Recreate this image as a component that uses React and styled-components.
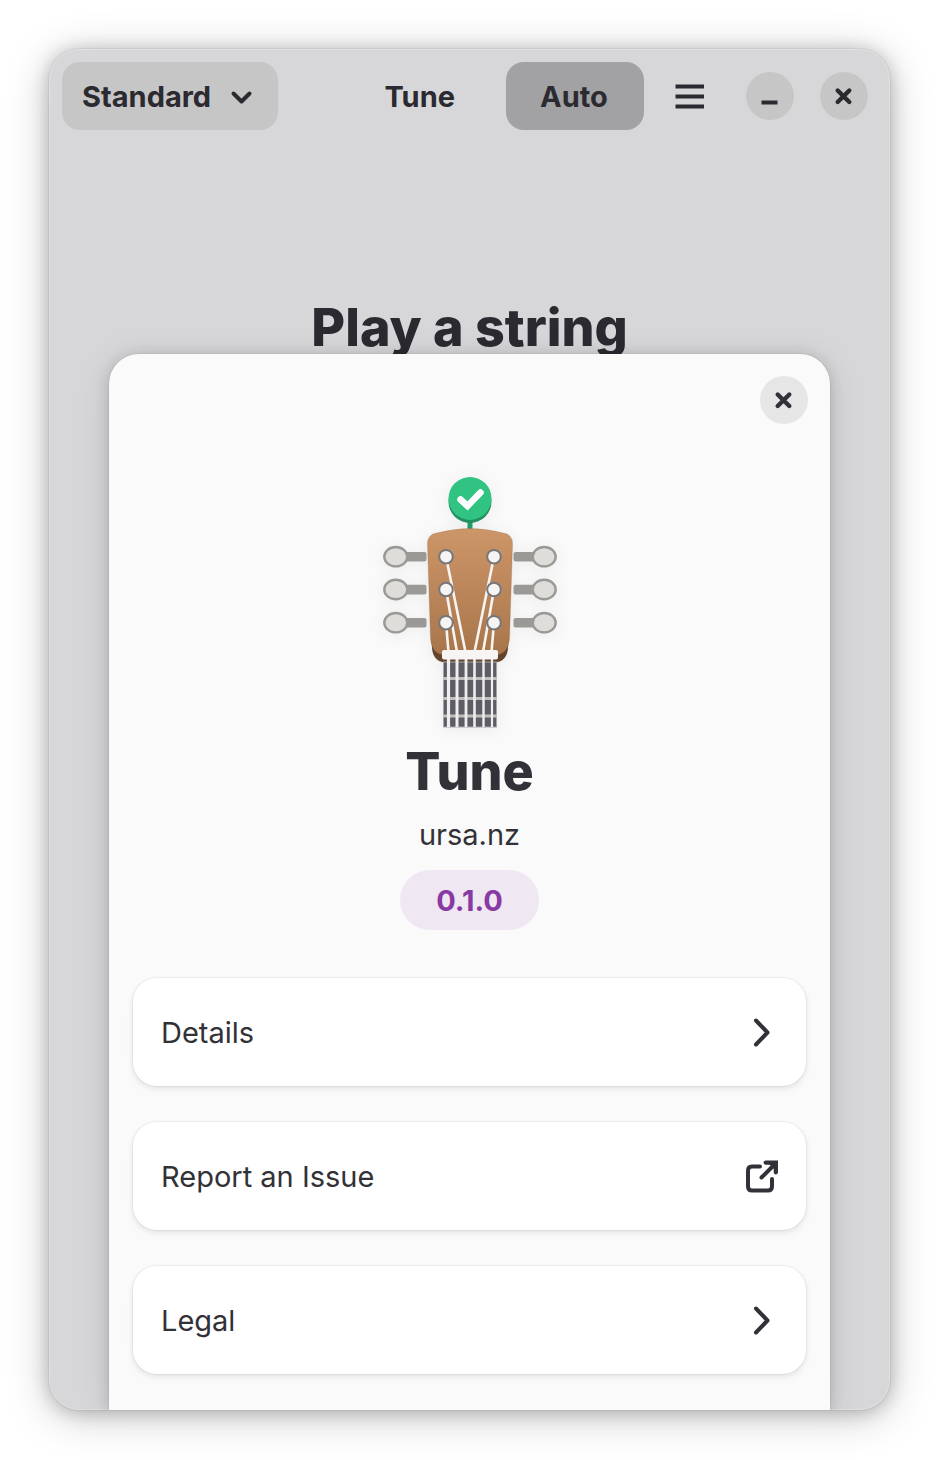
import { useState } from "react"
import styled, { createGlobalStyle } from "styled-components"

const GlobalStyle = createGlobalStyle`
  *, *::before, *::after {
    box-sizing: border-box;
  }

  body {
    margin: 0;
    background: #fff;
    color: #323137;
    font-family: Inter, "Liberation Sans", sans-serif;
    font-size: 29px;
    line-height: 36px;
  }

  button, select {
    font: inherit;
    color: inherit;
    border: 0;
    cursor: pointer;
  }
`

const Page = styled.div`
  padding: 49px 50px 49px 49px;
`

// the main view and the dialog share one grid cell, so the dialog lies on top
const Window = styled.div`
  display: grid;
  border-radius: 30px;
  overflow: hidden;
  background: #d7d7d9;
  box-shadow: 0 0 0 1px rgba(0, 0, 0, 0.05), 0 2px 18px rgba(0, 0, 0, 0.22),
    0 6px 44px rgba(0, 0, 0, 0.22);
`

const MainView = styled.main`
  grid-area: 1 / 1;
  border-radius: 30px;
  box-shadow: inset 0 0 0 1px rgba(255, 255, 255, 0.25);
  color: #2b2a30;
`

const HeaderBar = styled.header`
  display: flex;
  align-items: center;
  padding: 13px 22px 13px 13px;
  font-weight: 700;
`

const TuningPicker = styled.label`
  display: grid;
  align-items: center;
  height: 68px;
  border-radius: 18px;
  background: #c6c6c6;

  select,
  svg {
    grid-area: 1 / 1;
  }

  select {
    appearance: none;
    width: 216px;
    height: 68px;
    padding: 2px 60px 0 20px;
    border-radius: 18px;
    background: transparent;
    font-weight: 700;
  }

  svg {
    justify-self: end;
    margin-right: 20px;
    pointer-events: none;
  }
`

const WindowTitle = styled.div`
  margin-left: auto;
  margin-right: 51px;
  padding-top: 2px;
`

const ToggleButton = styled.button`
  width: 138px;
  height: 68px;
  padding: 2px 2px 0 0;
  border-radius: 18px;
  background: ${(props) => (props.$active ? "#a2a2a4" : "#c6c6c6")};
  font-weight: 700;
`

const FlatButton = styled.button`
  display: grid;
  place-items: center;
  width: 68px;
  height: 68px;
  margin: 0 22px 0 12px;
  padding: 0;
  background: transparent;
`

const RoundButton = styled.button`
  display: grid;
  place-items: center;
  width: 48px;
  height: 48px;
  padding: 0;
  border-radius: 50%;
  background: ${(props) => (props.$light ? "#e6e6e6" : "#c6c6c6")};

  & + & {
    margin-left: 26px;
  }
`

const Prompt = styled.h1`
  margin: 153px 0 0;
  text-align: center;
  font-size: 52px;
  font-weight: 800;
  line-height: 64px;
`

const Dialog = styled.section`
  grid-area: 1 / 1;
  display: flex;
  flex-direction: column;
  align-items: center;
  margin: 305px 60px 0;
  padding: 22px 22px 36px;
  border-radius: 30px 30px 0 0;
  background: #fafafb;
  box-shadow: 0 0 0 1px rgba(0, 0, 0, 0.04), 0 2px 14px rgba(0, 0, 0, 0.16),
    0 4px 36px rgba(0, 0, 0, 0.1);
  z-index: 1;
`

const DialogHeader = styled.div`
  display: flex;
  justify-content: flex-end;
  width: 100%;
  margin-bottom: 50px;
`

const AppIcon = styled.svg`
  display: block;
  filter: drop-shadow(0 2px 8px rgba(0, 0, 0, 0.06));
`

const AppName = styled.h2`
  margin: 10px 0 13px;
  font-size: 52px;
  font-weight: 800;
  line-height: 64px;
`

const Developer = styled.div`
  margin-bottom: 17px;
`

const Version = styled.button`
  height: 60px;
  padding: 2px 36px 0;
  border-radius: 30px;
  background: #efe7f2;
  color: #8939a4;
  font-weight: 700;
`

const List = styled.nav`
  display: flex;
  flex-direction: column;
  gap: 36px;
  width: 100%;
  margin-top: 48px;
  padding: 0 2px;
`

const Row = styled.button`
  display: flex;
  align-items: center;
  justify-content: space-between;
  width: 100%;
  height: 108px;
  padding: 0 28px;
  border-radius: 24px;
  background: #fff;
  color: inherit;
  text-decoration: none;
  box-shadow: 0 0 0 1px rgba(0, 0, 0, 0.04), 0 2px 4px 1px rgba(0, 0, 0, 0.06),
    0 4px 12px rgba(0, 0, 0, 0.03);
`

const RowTitle = styled.span`
  padding-top: 2px;
`

const Icon = ({ stroke = 4, children }) => (
  <svg
    width="32"
    height="32"
    viewBox="0 0 32 32"
    fill="none"
    stroke="currentColor"
    strokeWidth={stroke}
    strokeLinecap="round"
    strokeLinejoin="round"
    overflow="visible"
    aria-hidden="true"
  >
    {children}
  </svg>
)

const CloseIcon = () => (
  <Icon stroke={4.4}>
    <path d="M9.700 10.500 21.300 22M21.300 10.500 9.700 22" />
  </Icon>
)

const ChevronRight = () => (
  <Icon>
    <path d="M10 4.500 21.500 16.500 10 28.500" />
  </Icon>
)

const ExternalIcon = () => (
  <Icon>
    <path d="M14 6.500H6Q2 6.500 2 10.500V26.500Q2 30.500 6 30.500H22Q26 30.500 26 26.500V19" />
    <path d="M15.500 17.500 27 6" />
    <path
      d="M19.500 0.500H32V12.500Q31.500 14.500 29.800 14.500 28 14.500 27.700 12.500V4.800H19.500Q17.500 4.300 17.500 2.600 17.500 1 19.500 0.500Z"
      fill="currentColor"
      stroke="none"
    />
    <path d="M22 3H30V11Z" fill="currentColor" stroke="none" />
  </Icon>
)

const PEG_ROWS = [82.7, 115.5, 148.7]
const STRING_ENDS = [95.5, 87, 78.5]
const NECK_STRINGS = [78.5, 87, 96, 104.5, 113.5, 122]
const FRETS = [204.5, 224.5, 242]

const HeadstockSide = () => (
  <>
    {PEG_ROWS.map((y) => (
      <g key={y}>
        <rect x="34" y={y - 4.7} width="22.5" height="9.6" rx="2" fill="#9a9996" />
        <ellipse cx="25.8" cy={y} rx="11.5" ry="9.7" fill="#deddda" stroke="#9a9996" strokeWidth="2.4" />
      </g>
    ))}
  </>
)

const StringsSide = () => (
  <>
    {PEG_ROWS.map((y, i) => (
      <path key={y} d={`M76 ${y} L${STRING_ENDS[i]} 178`} stroke="#f6f5f4" strokeWidth="2.6" />
    ))}
    {PEG_ROWS.map((y) => (
      <circle key={y} cx="76" cy={y} r="6.8" fill="#f6f5f4" stroke="#77767b" strokeWidth="2" />
    ))}
  </>
)

const Headstock = () => (
  <AppIcon width="200" height="256" viewBox="0 0 200 256" role="img" aria-label="Guitar headstock">
    <defs>
      <linearGradient id="wood" x1="0" y1="0" x2="0" y2="1">
        <stop offset="0" stopColor="#cd9669" />
        <stop offset="1" stopColor="#a8754a" />
      </linearGradient>
    </defs>
    <rect x="97.500" y="44" width="5" height="12" fill="#209b66" />
    <circle cx="100" cy="27.500" r="21.500" fill="#218f5f" />
    <circle cx="100" cy="24.500" r="21.500" fill="#30c381" />
    <path
      d="M90.500 25.500 97.500 32 110.500 18.500"
      fill="none"
      stroke="#fff"
      strokeWidth="6.500"
      strokeLinecap="round"
      strokeLinejoin="miter"
    />
    <HeadstockSide />
    <g transform="matrix(-1 0 0 1 200 0)">
      <HeadstockSide />
    </g>
    <path d="M61 150 62 174Q63 187.500 75 188.500H125Q137 187.500 138 174L139 150Z" fill="#63452c" />
    <path
      d="M67 59Q84 54.500 100 54.500 116 54.500 133 59 142.500 60 142.500 70L139.500 164Q138.500 181 124 181H76Q61.500 181 60.500 164L57.500 70Q57.500 60 67 59Z"
      fill="url(#wood)"
      stroke="#865e3c"
      strokeOpacity="0.35"
      strokeWidth="0.8"
    />
    <StringsSide />
    <g transform="matrix(-1 0 0 1 200 0)">
      <StringsSide />
    </g>
    <rect x="73.500" y="188" width="53" height="65" fill="#5e5c64" stroke="#a5a4a8" />
    {FRETS.map((y) => (
      <path key={y} d={`M73 ${y}H127`} stroke="#c0bfbc" strokeWidth="2.800" />
    ))}
    {NECK_STRINGS.map((x, i) => (
      <path key={x} d={`M${x} 185V253`} stroke="#f0efee" strokeWidth={3.2 - i * 0.2} />
    ))}
    <rect x="72" y="176" width="56" height="9.500" rx="2" fill="#f6f5f4" />
  </AppIcon>
)

const App = () => {
  const [auto, setAuto] = useState(true)

  return (
    <Page>
      <GlobalStyle />
      <Window>
        <MainView>
          <HeaderBar>
            <TuningPicker>
              <select aria-label="Tuning" defaultValue="Standard">
                <option>Standard</option>
                <option>Drop D</option>
              </select>
              <Icon>
                <path d="M7.500 13.500 15.500 21.500 23.500 13.500" />
              </Icon>
            </TuningPicker>
            <WindowTitle>Tune</WindowTitle>
            <ToggleButton $active={auto} aria-pressed={auto} onClick={() => setAuto(!auto)}>
              Auto
            </ToggleButton>
            <FlatButton aria-label="Main menu">
              <Icon>
                <path d="M1.500 6.500H30M1.500 16.500H30M1.500 26.500H30" strokeLinecap="butt" />
              </Icon>
            </FlatButton>
            <RoundButton aria-label="Minimize">
              <Icon>
                <path d="M7.500 22.500H23.500" strokeLinecap="butt" />
              </Icon>
            </RoundButton>
            <RoundButton aria-label="Close window">
              <CloseIcon />
            </RoundButton>
          </HeaderBar>
          <Prompt>Play a string</Prompt>
        </MainView>

        <Dialog role="dialog" aria-labelledby="app-name">
          <DialogHeader>
            <RoundButton $light aria-label="Close">
              <CloseIcon />
            </RoundButton>
          </DialogHeader>
          <Headstock />
          <AppName id="app-name">Tune</AppName>
          <Developer>ursa.nz</Developer>
          <Version>0.1.0</Version>
          <List>
            <Row>
              <RowTitle>Details</RowTitle>
              <ChevronRight />
            </Row>
            <Row as="a" href="#issue">
              <RowTitle>Report an Issue</RowTitle>
              <ExternalIcon />
            </Row>
            <Row>
              <RowTitle>Legal</RowTitle>
              <ChevronRight />
            </Row>
          </List>
        </Dialog>
      </Window>
    </Page>
  )
}

export default App
